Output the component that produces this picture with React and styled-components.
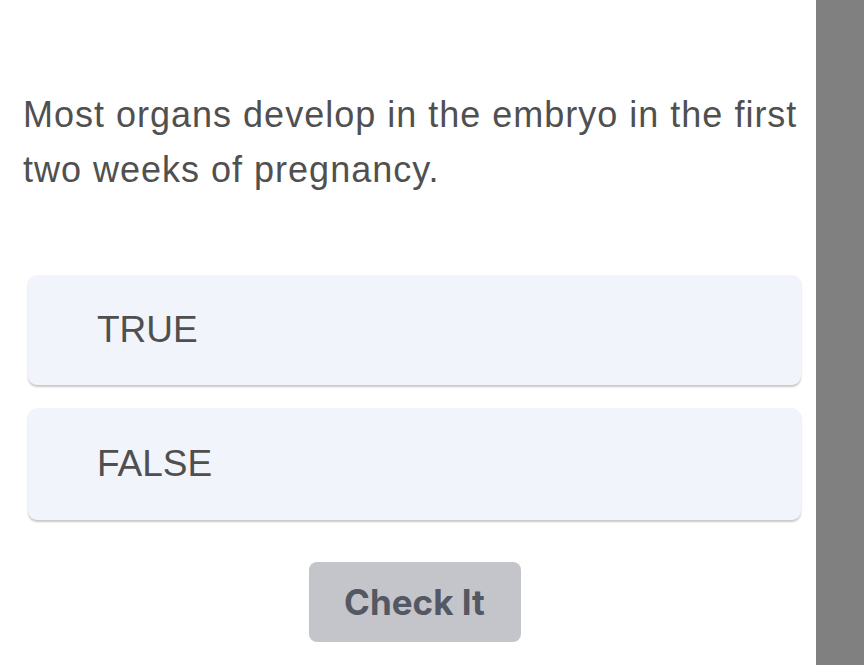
import styled, { createGlobalStyle } from "styled-components";

const GlobalStyle = createGlobalStyle`
  html, body {
    margin: 0;
    padding: 0;
    background: #ffffff;
  }
  body {
    font-family: "Liberation Sans", Arial, sans-serif;
  }
`;

const Page = styled.div`
  display: flex;
  height: 665px;
  overflow: hidden;
`;

const Quiz = styled.main`
  flex: 1;
  display: flex;
  flex-direction: column;
  padding: 87px 15px 0 28px;
`;

const Question = styled.p`
  margin: 0 0 0 -5px;
  font-size: 36px;
  line-height: 55px;
  letter-spacing: 1px;
  color: #505050;
`;

const Options = styled.div`
  display: flex;
  flex-direction: column;
  gap: 23px;
  margin-top: 78px;
`;

const Option = styled.button`
  display: flex;
  align-items: center;
  height: ${(p) => p.$height}px;
  padding: 0 0 0 69px;
  border: none;
  border-radius: 9px;
  background: #f2f4fb;
  box-shadow: 0 2px 2px rgba(0, 0, 0, 0.22);
  font-family: inherit;
  font-size: 37px;
  color: #4f4f4f;
  text-align: left;
  cursor: pointer;
`;

const Footer = styled.div`
  display: flex;
  justify-content: center;
  margin-top: 42px;
`;

const CheckButton = styled.button`
  width: 212px;
  height: 80px;
  border: none;
  border-radius: 8px;
  background: #c4c5ca;
  font-family: Inter, "Liberation Sans", sans-serif;
  font-weight: 700;
  font-size: 35px;
  color: #535862;
  cursor: pointer;
`;

const SideBar = styled.aside`
  width: 48px;
  background: #808080;
`;

const options = [
  { label: "TRUE", height: 110 },
  { label: "FALSE", height: 112 },
];

export default function App() {
  return (
    <Page>
      <GlobalStyle />
      <Quiz>
        <Question>
          Most organs develop in the embryo in the first two weeks of pregnancy.
        </Question>
        <Options>
          {options.map((o) => (
            <Option key={o.label} $height={o.height}>
              {o.label}
            </Option>
          ))}
        </Options>
        <Footer>
          <CheckButton>Check It</CheckButton>
        </Footer>
      </Quiz>
      <SideBar />
    </Page>
  );
}
